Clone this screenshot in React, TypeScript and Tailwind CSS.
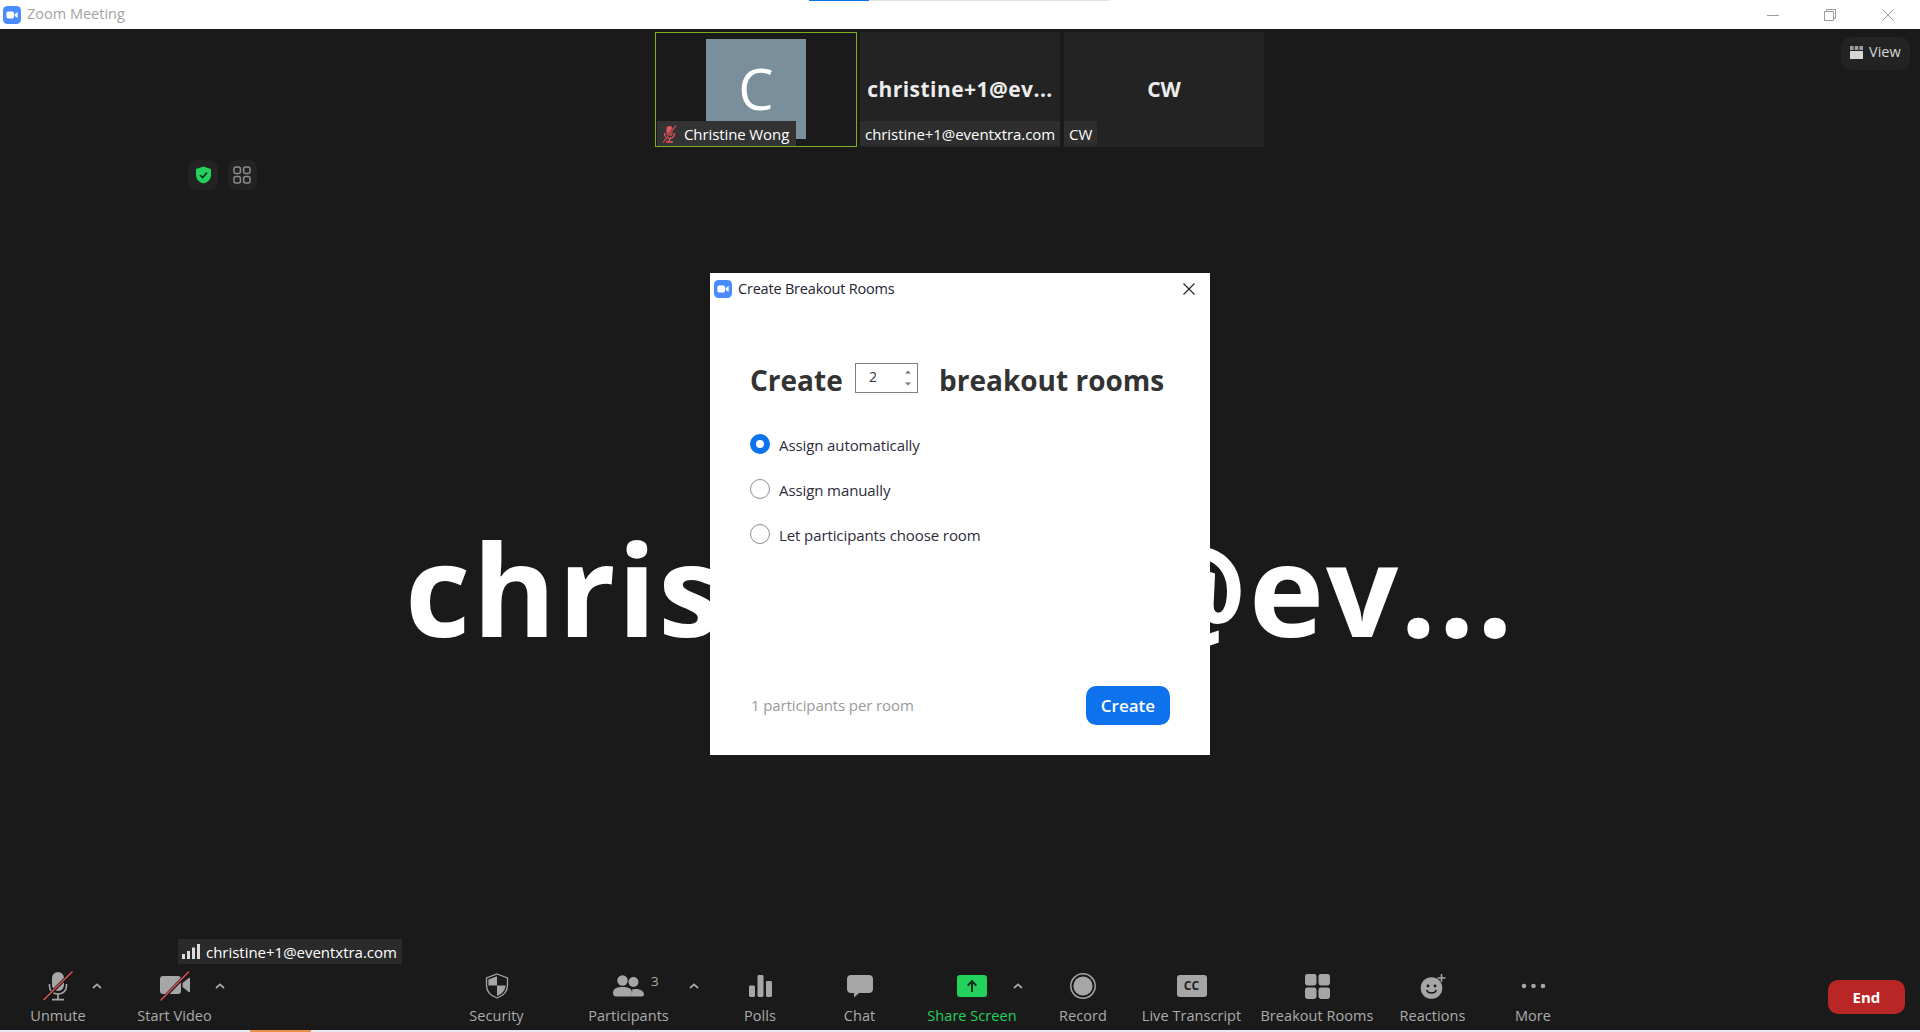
import React from "react";

const FONT = { fontFamily: '"Open Sans", "Noto Sans", sans-serif' };

function ZoomLogo({ size }: { size: number }) {
  return (
    <svg width={size} height={size} viewBox="0 0 18 18" className="shrink-0">
      <rect x="0" y="0" width="18" height="18" rx="4.5" fill="#4a8cff" />
      <rect x="3.4" y="5.6" width="7.6" height="6.8" rx="1.6" fill="#fff" />
      <path d="M11.6 8.2 L14.6 6 V12 L11.6 9.8 Z" fill="#fff" />
    </svg>
  );
}

function Caret() {
  return (
    <svg width="12" height="8" viewBox="0 0 12 8" className="block">
      <path d="M2 6 L6 2.4 L10 6" fill="none" stroke="#aaa" strokeWidth="1.7" />
    </svg>
  );
}

const G = "#a6a6a6";

function MicIcon() {
  return (
    <svg width="30" height="30" viewBox="0 0 30 30">
      <rect x="9" y="1" width="12" height="19" rx="6" fill={G} />
      <path d="M6.5 13 V15 C6.5 20 10.5 23 15 23 C19.5 23 23.5 20 23.5 15 V13" fill="none" stroke={G} strokeWidth="1.6" />
      <path d="M15 23 V28 M9 28.6 H21" stroke={G} strokeWidth="1.7" />
      <path d="M0.5 29.5 L29.5 0.5" stroke="#1a1a1a" strokeWidth="3.2" />
      <path d="M0.5 29 L29.5 0.5" stroke="#e5545a" strokeWidth="1.3" />
    </svg>
  );
}

function VideoIcon() {
  return (
    <svg width="30" height="30" viewBox="0 0 30 30">
      <rect x="0" y="5" width="21" height="18" rx="3" fill={G} />
      <path d="M22.5 12 L29 6.8 C29.6 6.4 30 6.8 30 7.4 V20.6 C30 21.2 29.6 21.6 29 21.2 L22.5 16 Z" fill={G} />
      <path d="M0.5 30 L29 0.8" stroke="#1a1a1a" strokeWidth="3.2" />
      <path d="M0.5 29.5 L29 0.5" stroke="#e5545a" strokeWidth="1.3" />
    </svg>
  );
}

function ShieldIcon() {
  return (
    <svg width="24" height="26" viewBox="0 0 24 26">
      <path d="M12 1 L22.5 5 V12 C22.5 18.5 18 23 12 25 C6 23 1.5 18.5 1.5 12 V5 Z" fill="none" stroke={G} strokeWidth="1.3" />
      <path d="M12 3.2 V12.5 H3.4 V6.4 Z" fill={G} />
      <path d="M12 12.5 H20.6 C20.2 17.6 16.8 21 12 23 Z" fill={G} />
    </svg>
  );
}

function PeopleIcon() {
  return (
    <svg width="31" height="22" viewBox="0 0 31 22">
      <circle cx="20.5" cy="7" r="5" fill={G} />
      <path d="M17 21.5 C19 19.5 20 17 18.8 14.6 C23 13 31 14.6 31 19.5 C31 20.8 30 21.5 29 21.5 Z" fill={G} />
      <circle cx="9.5" cy="5.5" r="5.2" fill={G} />
      <path d="M0 18 C0 13.5 4 12 9.5 12 C15 12 19 13.5 19 18 C19 20.5 17.5 21.5 16 21.5 H3 C1.5 21.5 0 20.5 0 18 Z" fill={G} />
    </svg>
  );
}

function PollsIcon() {
  return (
    <svg width="23" height="22" viewBox="0 0 23 22">
      <rect x="0" y="10.5" width="6" height="11.5" rx="1.4" fill={G} />
      <rect x="8.5" y="0" width="6" height="22" rx="1.4" fill={G} />
      <rect x="17" y="6" width="6" height="16" rx="1.4" fill={G} />
    </svg>
  );
}

function ChatIcon() {
  return (
    <svg width="26" height="23" viewBox="0 0 26 23">
      <path d="M4 0 H22 C24.4 0 26 1.6 26 4 V14 C26 16.4 24.4 18 22 18 H12 L7 22.6 V18 H4 C1.6 18 0 16.4 0 14 V4 C0 1.6 1.6 0 4 0 Z" fill={G} />
    </svg>
  );
}

function ShareIcon() {
  return (
    <svg width="30" height="22" viewBox="0 0 30 22">
      <rect width="30" height="22" rx="3" fill="#22d25c" />
      <path d="M15 17 V6.5 M10.8 10.6 L15 6 L19.2 10.6" fill="none" stroke="#10301c" strokeWidth="2" />
    </svg>
  );
}

function RecordIcon() {
  return (
    <svg width="26" height="26" viewBox="0 0 26 26">
      <circle cx="13" cy="13" r="12.2" fill="none" stroke={G} strokeWidth="1.5" />
      <circle cx="13" cy="13" r="9.6" fill={G} />
    </svg>
  );
}

function GridIcon() {
  return (
    <svg width="25" height="25" viewBox="0 0 25 25">
      <rect x="0" y="0" width="11.5" height="11.5" rx="2.4" fill={G} />
      <rect x="13.5" y="0" width="11.5" height="11.5" rx="2.4" fill={G} />
      <rect x="0" y="13.5" width="11.5" height="11.5" rx="2.4" fill={G} />
      <rect x="13.5" y="13.5" width="11.5" height="11.5" rx="2.4" fill={G} />
    </svg>
  );
}

function ReactionsIcon() {
  return (
    <svg width="26" height="25" viewBox="0 0 26 25">
      <circle cx="11.5" cy="14" r="10.8" fill={G} />
      <circle cx="8" cy="12" r="1.4" fill="#1a1a1a" />
      <circle cx="15" cy="12" r="1.4" fill="#1a1a1a" />
      <path d="M6.6 16 C8 20 15 20 16.4 16" fill="none" stroke="#1a1a1a" strokeWidth="1.5" />
      <path d="M21.5 0 V8 M17.5 4 H25.5" stroke={G} strokeWidth="1.5" />
    </svg>
  );
}

function MoreIcon() {
  return (
    <svg width="25" height="6" viewBox="0 0 25 6">
      <circle cx="3" cy="3" r="2.3" fill={G} />
      <circle cx="12.5" cy="3" r="2.3" fill={G} />
      <circle cx="22" cy="3" r="2.3" fill={G} />
    </svg>
  );
}

function Tool({ label, width, icon, green, className }: { label: string; width: string; icon: React.ReactNode; green?: boolean; className?: string }) {
  return (
    <div className={`flex flex-col items-center shrink-0 ${width} ${className ?? ""}`}>
      <div className="h-[34px] flex items-center justify-center">{icon}</div>
      <span className={`text-[14.5px] leading-[20px] mt-[3px] tracking-[0.05px] whitespace-nowrap ${green ? "text-[#22d25c]" : "text-[#ababab]"}`}>{label}</span>
    </div>
  );
}

function CaretSlot({ className }: { className: string }) {
  return <div className={`w-[12px] h-[34px] flex items-center justify-center shrink-0 ${className}`}><Caret /></div>;
}

function Radio({ checked, label }: { checked?: boolean; label: string }) {
  return (
    <div className="flex items-center h-[20px] gap-[9px]">
      {checked ? (
        <span className="w-[20px] h-[20px] rounded-full border-[6px] border-[#0e72ed] bg-white shrink-0" />
      ) : (
        <span className="w-[20px] h-[20px] rounded-full border border-[#8e8e8e] bg-white shrink-0" />
      )}
      <span className="text-[15px] leading-[20px] text-[#2d2d3a] tracking-[-0.1px] mt-[2px]">{label}</span>
    </div>
  );
}

export default function App() {
  return (
    <div className="h-[1032px] w-[1920px] flex flex-col overflow-hidden bg-[#1a1a1a]" style={FONT}>
      {/* Title bar */}
      <header className="relative h-[29px] bg-white flex items-center pl-[3px] shrink-0">
        <ZoomLogo size={18} />
        <span className="ml-[6px] text-[14.5px] text-[#a3a3a3] -mt-[1px]">Zoom Meeting</span>
        <div className="absolute left-[809px] top-0 flex h-[1px]">
          <div className="w-[60px] bg-[#0e72ed]" />
          <div className="w-[240px] bg-[#e3e3e3]" />
        </div>
        <div className="ml-auto flex items-center pr-[26px] gap-[46px]">
          <svg width="12" height="12" viewBox="0 0 12 12"><path d="M0 6.5 H12" stroke="#9c9c9c" strokeWidth="1" /></svg>
          <svg className="-ml-[1px]" width="12" height="12" viewBox="0 0 12 12">
            <path d="M0.5 2.5 H9.5 V11.5 H0.5 Z M2.5 2.5 V0.5 H11.5 V9.5 H9.5" fill="none" stroke="#9c9c9c" strokeWidth="1" />
          </svg>
          <svg width="12" height="12" viewBox="0 0 12 12"><path d="M0.5 0.5 L11.5 11.5 M11.5 0.5 L0.5 11.5" stroke="#9c9c9c" strokeWidth="1" /></svg>
        </div>
      </header>

      {/* Main area */}
      <main className="relative flex-1 bg-[#1a1a1a] overflow-hidden">
        {/* Thumbnail strip */}
        <div className="flex pt-[3px] pl-[655px]">
          <div className="relative w-[202px] h-[115px] border border-[#7fb020] flex justify-center pt-[6px] shrink-0">
            <div className="w-[100px] h-[100px] bg-[#7a8f9c] flex items-center justify-center text-white text-[56px] leading-none pb-[2px]">C</div>
            <div className="absolute left-[1px] top-[88px] h-[25px] w-[139px] bg-[#333333] flex items-center pl-[5px] gap-[7px]">
              <svg width="15" height="18" viewBox="0 0 15 18">
                <rect x="4.5" y="1" width="6" height="10" rx="3" fill="#e5545a" />
                <path d="M2.5 8 C2.5 15 12.5 15 12.5 8 M7.5 13 V17 M4 17 H11" fill="none" stroke="#e5545a" strokeWidth="1.5" />
                <path d="M1 17.5 L14 0.5" stroke="#333" strokeWidth="2.4" />
                <path d="M1 17.5 L14 0.5" stroke="#e5545a" strokeWidth="1.2" />
              </svg>
              <span className="text-[15px] text-white leading-none tracking-[-0.1px] mt-[1px] whitespace-nowrap">Christine Wong</span>
            </div>
          </div>
          <div className="relative ml-[3px] w-[200px] h-[115px] bg-[#232323] flex items-center justify-center shrink-0">
            <span className="text-[21px] font-bold text-[#ececec] pt-[1px] tracking-[0.45px] whitespace-nowrap">christine+1@ev...</span>
            <div className="absolute left-0 bottom-[1px] h-[25px] bg-[#2e2e2e] w-[200px] flex items-center pl-[5px]">
              <span className="text-[15px] text-white whitespace-nowrap tracking-[-0.05px] mt-[1px]">christine+1@eventxtra.com</span>
            </div>
          </div>
          <div className="relative ml-[4px] w-[200px] h-[115px] bg-[#232323] flex items-center justify-center shrink-0">
            <span className="text-[21px] font-bold text-[#ececec] pt-[1px]">CW</span>
            <div className="absolute left-0 bottom-[1px] h-[25px] bg-[#2e2e2e] flex items-center px-[5px]">
              <span className="text-[15px] text-white mt-[1px]">CW</span>
            </div>
          </div>
        </div>

        {/* View button */}
        <div className="absolute left-[1841px] top-[8px] w-[69px] h-[33px] rounded-[10px] bg-[#232323] flex items-center pl-[9px] gap-[6px]">
          <svg className="-mt-[3px]" width="13" height="13" viewBox="0 0 13 13">
            <rect x="0" y="0" width="3.6" height="4" fill="#9d9d9d" />
            <rect x="4.7" y="0" width="3.6" height="4" fill="#9d9d9d" />
            <rect x="9.4" y="0" width="3.6" height="4" fill="#9d9d9d" />
            <rect x="0" y="5" width="13" height="8" fill="#d6d6d6" />
          </svg>
          <span className="text-[14.5px] text-[#d6d6d6] -mt-[3px]">View</span>
        </div>

        {/* Security pills */}
        <div className="absolute left-[188px] top-[131px] flex gap-[10px]">
          <div className="w-[30px] h-[30px] rounded-[8px] bg-[#232323] flex items-center justify-center">
            <svg width="17" height="18" viewBox="0 0 17 18">
              <path d="M8.5 0.5 L16 3 V9 C16 13.5 12.5 16.5 8.5 17.5 C4.5 16.5 1 13.5 1 9 V3 Z" fill="#22d25c" />
              <path d="M5 9 L7.6 11.6 L12 6.6" fill="none" stroke="#10301c" strokeWidth="1.6" />
            </svg>
          </div>
          <div className="w-[29px] h-[30px] rounded-[8px] bg-[#232323] flex items-center justify-center">
            <svg className="-ml-[1px]" width="18" height="18" viewBox="0 0 18 18">
              <rect x="1" y="1" width="6.4" height="6.4" rx="2" fill="none" stroke="#8c8c8c" strokeWidth="1.5" />
              <rect x="10.6" y="1" width="6.4" height="6.4" rx="2" fill="none" stroke="#8c8c8c" strokeWidth="1.5" />
              <rect x="1" y="10.6" width="6.4" height="6.4" rx="2" fill="none" stroke="#8c8c8c" strokeWidth="1.5" />
              <rect x="10.6" y="10.6" width="6.4" height="6.4" rx="2" fill="none" stroke="#8c8c8c" strokeWidth="1.5" />
            </svg>
          </div>
        </div>

        {/* Big name */}
        <div className="absolute left-0 right-0 top-[479px] text-center text-white font-bold text-[127px] leading-[160px] tracking-[2px] whitespace-nowrap">
          christine+1@ev...
        </div>

        {/* Dialog */}
        <section className="absolute left-[710px] top-[244px] w-[500px] h-[482px] bg-white flex flex-col">
          <div className="flex items-center h-[31px] pl-[4px] pt-[0px] shrink-0">
            <ZoomLogo size={18} />
            <span className="ml-[6px] text-[14.5px] text-[#232333] tracking-[-0.2px]">Create Breakout Rooms</span>
            <svg className="ml-auto mr-[15px]" width="12" height="12" viewBox="0 0 12 12"><path d="M0.5 0.5 L11.5 11.5 M11.5 0.5 L0.5 11.5" stroke="#222" strokeWidth="1.1" /></svg>
          </div>
          <div className="flex items-center pl-[41px] mt-[58px] h-[32px]">
            <span className="text-[28px] font-bold leading-[32px] text-[#333] w-[104px] mt-[4px] -ml-[1px] mr-[1px]">Create</span>
            <div className="relative w-[63px] h-[30px] border border-[#808080] bg-white flex items-center pl-[13px] shrink-0">
              <span className="text-[14px] text-[#333] -mt-[3px]">2</span>
              <svg className="absolute right-[5px] top-[5px]" width="8" height="18" viewBox="0 0 8 18">
                <path d="M4 1.5 L7 4.5 H1 Z" fill="#777" />
                <path d="M4 16.5 L7 13.5 H1 Z" fill="#777" />
              </svg>
            </div>
            <span className="ml-[21px] text-[28px] font-bold leading-[32px] text-[#333] whitespace-nowrap mt-[4px]">breakout rooms</span>
          </div>
          <div className="flex flex-col gap-[25px] pl-[40px] mt-[40px]">
            <Radio checked label="Assign automatically" />
            <Radio label="Assign manually" />
            <Radio label="Let participants choose room" />
          </div>
          <div className="mt-auto pl-[41px] pr-[40px] pb-[30px] flex items-center justify-between">
            <span className="text-[15px] text-[#9a9a9a] tracking-[-0.1px]">1 participants per room</span>
            <div className="w-[84px] h-[39px] rounded-[10px] bg-[#0e72ed] flex items-center justify-center text-white text-[17px] font-semibold">Create</div>
          </div>
        </section>

        {/* Self name chip */}
        <div className="absolute left-[178px] top-[910px] w-[224px] h-[25px] bg-[#2a2a2a] flex items-center pl-[4px] gap-[6px]">
          <svg width="18" height="15" viewBox="0 0 18 15">
            <rect x="0" y="10" width="3" height="5" fill="#ddd" />
            <rect x="5" y="7" width="3" height="8" fill="#ddd" />
            <rect x="10" y="3.5" width="3" height="11.5" fill="#ddd" />
            <rect x="15" y="0" width="3" height="15" fill="#ddd" />
          </svg>
          <span className="text-[15px] text-white whitespace-nowrap tracking-[-0.02px] mt-[1px]">christine+1@eventxtra.com</span>
        </div>
      </main>

      {/* Toolbar */}
      <footer className="h-[61px] shrink-0 bg-[#1a1a1a] flex items-start pt-[0px]">
        <Tool label="Unmute" width="w-[56px]" icon={<MicIcon />} className="ml-[30px]" />
        <CaretSlot className="ml-[5px]" />
        <Tool label="Start Video" width="w-[75px]" icon={<VideoIcon />} className="ml-[34px]" />
        <CaretSlot className="ml-[2px]" />
        <Tool label="Security" width="w-[55px]" icon={<ShieldIcon />} className="ml-[243px]" />
        <Tool
          label="Participants"
          width="w-[79px]"
          className="ml-[65px] relative"
          icon={
            <div className="relative">
              <PeopleIcon />
              <span className="absolute left-[38px] -top-[3px] text-[13.5px] leading-[18px] text-[#ababab]">3</span>
            </div>
          }
        />
        <CaretSlot className="ml-[20px]" />
        <Tool label="Polls" width="w-[30px]" icon={<PollsIcon />} className="ml-[45px]" />
        <Tool label="Chat" width="w-[31px]" icon={<ChatIcon />} className="ml-[69px]" />
        <Tool label="Share Screen" width="w-[88px]" icon={<ShareIcon />} green className="ml-[53px]" />
        <CaretSlot className="ml-[-4px]" />
        <Tool label="Record" width="w-[48px]" icon={<RecordIcon />} className="ml-[35px]" />
        <Tool
          label="Live Transcript"
          width="w-[97px]"
          className="ml-[36px]"
          icon={
            <div className="w-[30px] h-[22px] rounded-[3px] bg-[#a6a6a6] flex items-center justify-center text-[#1f1f1f] text-[12px] font-bold leading-none">CC</div>
          }
        />
        <Tool label="Breakout Rooms" width="w-[112px]" icon={<GridIcon />} className="ml-[21px]" />
        <Tool label="Reactions" width="w-[65px]" icon={<ReactionsIcon />} className="ml-[27px]" />
        <Tool label="More" width="w-[36px]" icon={<MoreIcon />} className="ml-[50px]" />
        <div className="ml-[277px] mt-[11px] w-[77px] h-[34px] rounded-[10px] bg-[#b92626] flex items-center justify-center text-white text-[15px] font-bold shrink-0">End</div>
      </footer>

      {/* Desktop peeking below the window */}
      <div className="h-[2px] shrink-0 bg-[#e6eaf3] flex">
        <div className="ml-[250px] w-[61px] bg-[#e8914a]" />
      </div>
    </div>
  );
}
